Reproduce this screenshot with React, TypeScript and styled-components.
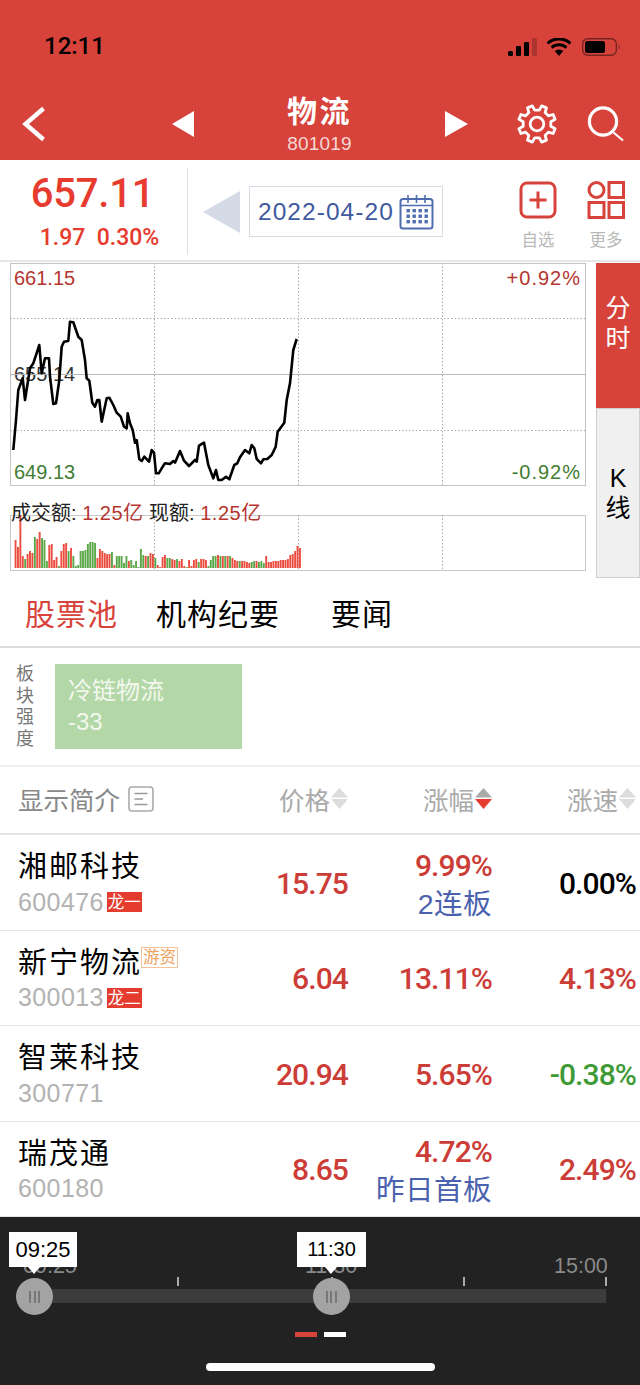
import styled, { createGlobalStyle } from 'styled-components';

const RED = '#d7433b';
const NUM_RED = '#cc3d37';
const NUM_GREEN = '#3f9a35';
const BLUE = '#4a62ad';

// traced off the intraday line, in px * 3
const pricePoints = [
  40, 570, 48, 480, 55, 390, 68, 355, 75, 420, 90, 325, 100, 310, 118, 255, 125, 340, 135, 295, 147, 295, 150, 350,
  160, 432, 168, 430, 178, 360, 185, 260, 192, 245, 205, 243, 210, 185, 220, 187, 235, 230, 245, 240, 255, 300, 260,
  355, 268, 362, 277, 428, 285, 440, 292, 420, 298, 420, 305, 485, 320, 415, 328, 413, 340, 435, 350, 458, 362, 470,
  372, 500, 380, 505, 383, 460, 390, 490, 398, 510, 405, 548, 410, 540, 418, 598, 425, 603, 433, 590, 447, 605, 455,
  570, 462, 578, 468, 640, 476, 640, 485, 625, 495, 610, 510, 612, 520, 603, 525, 608, 540, 573, 552, 602, 567, 618,
  585, 600, 590, 605, 597, 557, 612, 548, 625, 615, 640, 655, 648, 630, 655, 660, 665, 660, 678, 650, 688, 658, 703,
  615, 712, 610, 720, 592, 735, 570, 748, 580, 755, 555, 763, 565, 770, 597, 783, 610, 790, 598, 802, 597, 815, 585,
  827, 560, 833, 515, 853, 488, 860, 420, 870, 370, 880, 270, 890, 237,
];

const pricePath = pricePoints
  .reduce<string[]>((acc, v, i) => {
    if (i % 2 === 0) acc.push(`${(v / 3 - 10).toFixed(1)},${(pricePoints[i + 1] / 3 - 3).toFixed(1)}`);
    return acc;
  }, [])
  .join(' ');

// positive = red bar, negative = green bar
const volumes = [
  28, 21, 53, 12, -9, 14, 17, 15, -31, 29, 36, -30, -28, -7, 23, 24, 8, 11, -2, 17, 24, 25, -17, 20, -12, -2, -3, -17,
  -17, -18, -24, -26, -26, -25, 10, 19, 17, 15, 14, 14, -16, 3, -12, -12, -12, -5, -12, 7, -8, -3, -7, -1, -19, -13,
  12, -12, 15, 14, -10, 3, 1, 11, 13, -10, -10, 9, 8, -9, 7, 9, 2, -1, 8, 2, 8, 9, -6, 9, 9, 8, -2, -8, -12, -12, 13,
  -12, 12, -12, 12, -12, 10, 8, 7, -7, 7, 7, 6, 5, -6, -7, 7, -6, -7, -5, 12, 6, 6, 7, 7, 7, 8, 8, 8, 9, 13, 14, 17,
  22, 20,
];

const gearPath = (() => {
  const pts: string[] = [];
  const polar = (r: number, deg: number) => {
    const a = (deg * Math.PI) / 180;
    return `${(r * Math.cos(a)).toFixed(2)} ${(r * Math.sin(a)).toFixed(2)}`;
  };
  for (let i = 0; i < 8; i++) {
    const a = i * 45 + 22.5;
    pts.push(polar(14, a - 13), polar(18.7, a - 8), polar(18.7, a + 8), polar(14, a + 13));
  }
  return `M${pts.join(' L')} Z`;
})();

const stocks = [
  { name: '湘邮科技', code: '600476', rank: '龙一', price: '15.75', pct: '9.99%', note: '2连板', speed: '0.00%', tone: 'flat' },
  { name: '新宁物流', code: '300013', rank: '龙二', hot: '游资', price: '6.04', pct: '13.11%', speed: '4.13%', tone: 'up' },
  { name: '智莱科技', code: '300771', price: '20.94', pct: '5.65%', speed: '-0.38%', tone: 'down' },
  { name: '瑞茂通', code: '600180', price: '8.65', pct: '4.72%', note: '昨日首板', speed: '2.49%', tone: 'up' },
];

const speedColors: Record<string, string> = { flat: '#000', up: NUM_RED, down: NUM_GREEN };

function SortArrows({ active }: { active?: boolean }) {
  return (
    <svg width='17' height='21' viewBox='0 0 17 21'>
      <path d='M8.5 0 L17 9.5 H0 Z' fill={active ? '#aaa' : '#dcdcdc'} />
      <path d='M8.5 21 L17 11 H0 Z' fill={active ? '#e63b2e' : '#dcdcdc'} />
    </svg>
  );
}

function App() {
  return (
    <>
      <GlobalStyle />
      <PageDiv>
        <HeaderDiv>
          <StatusBar>
            <TimeSpan>12:11</TimeSpan>
            <StatusIcons>
              <svg width='29' height='18' viewBox='0 0 29 18'>
                <rect x='0' y='13' width='5' height='5' rx='1.5' fill='#000' />
                <rect x='8' y='8' width='5' height='10' rx='1' fill='#000' />
                <rect x='16' y='4' width='5' height='14' rx='1' fill='#000' />
                <rect x='24' y='0' width='5' height='18' rx='1' fill='#000' opacity='0.2' />
              </svg>
              <svg width='27' height='18' viewBox='0 0 27 18'>
                <path d='M13 18 L8.8 13 A6.4 6.4 0 0 1 17.2 13 Z' fill='#000' />
                <path d='M5.6 9.6 A11 11 0 0 1 20.4 9.6' fill='none' stroke='#000' strokeWidth='3' />
                <path d='M1.6 5.4 A16.8 16.8 0 0 1 24.4 5.4' fill='none' stroke='#000' strokeWidth='3' />
              </svg>
              <svg width='39' height='18' viewBox='0 0 39 18'>
                <rect x='0.7' y='0.7' width='33.6' height='16.6' rx='5' fill='none' stroke='#000' strokeOpacity='0.45' strokeWidth='1.4' />
                <rect x='3' y='3' width='20' height='12' rx='2.5' fill='#000' />
                <path d='M36.5 6.5 C38 7 38 11 36.5 11.5 Z' fill='#000' fillOpacity='0.45' />
              </svg>
            </StatusIcons>
          </StatusBar>
          <NavBar>
            <svg width='24' height='36' viewBox='0 0 24 36'>
              <path d='M21.5 2.5 L3.5 18 L21.5 33.5' fill='none' stroke='#fff' strokeWidth='4.4' />
            </svg>
            <NavTriangle $dir='left' />
            <TitleBlock>
              <TitleText>物流</TitleText>
              <CodeText>801019</CodeText>
            </TitleBlock>
            <NavTriangle $dir='right' />
            <NavIconCell>
              <svg width='40' height='40' viewBox='-20 -20 40 40'>
                <path d={gearPath} fill='none' stroke='#fff' strokeWidth='2.8' strokeLinejoin='round' />
                <circle r='6.8' fill='none' stroke='#fff' strokeWidth='2.8' />
              </svg>
            </NavIconCell>
            <NavIconCell>
              <svg width='40' height='40' viewBox='0 0 40 40'>
                <circle cx='17' cy='17.5' r='13.6' fill='none' stroke='#fff' strokeWidth='3.2' />
                <path d='M27.5 28.5 L37 36.5' stroke='#fff' strokeWidth='2.2' />
              </svg>
            </NavIconCell>
          </NavBar>
        </HeaderDiv>

        <InfoRow>
          <QuoteBlock>
            <QuotePrice>657.11</QuotePrice>
            <QuoteChange>1.97&nbsp;&nbsp;0.30%</QuoteChange>
          </QuoteBlock>
          <DateGroup>
            <PrevDayTriangle />
            <DateBox>
              <DateText>2022-04-20</DateText>
              <svg width='35' height='36' viewBox='0 0 35 36'>
                <rect x='1.5' y='5' width='32' height='29.5' rx='2.5' fill='none' stroke='#506cb0' strokeWidth='2' />
                <path d='M1.5 11.5 H33.5' stroke='#506cb0' strokeWidth='1.6' />
                <path d='M9 1 V9 M17.5 1 V9 M26 1 V9' stroke='#506cb0' strokeWidth='1.6' />
                <g fill='#506cb0'>
                  {[15, 20.5, 26].map((y) =>
                    [7.5, 13.5, 19.5, 25.5].map((x) => <rect key={`${x}-${y}`} x={x} y={y} width='3.4' height='3.4' />)
                  )}
                </g>
              </svg>
            </DateBox>
          </DateGroup>
          <ActionsDiv>
            <ActionItem>
              <svg width='38' height='38' viewBox='0 0 38 38'>
                <rect x='2' y='2' width='34' height='34' rx='6' fill='none' stroke={RED} strokeWidth='3' />
                <path d='M10.5 19 H27.5 M19 10.5 V27.5' stroke={RED} strokeWidth='3' />
              </svg>
              <ActionLabel>自选</ActionLabel>
            </ActionItem>
            <ActionItem>
              <svg width='38' height='38' viewBox='0 0 38 38'>
                <circle cx='9.5' cy='9' r='7.5' fill='none' stroke={RED} strokeWidth='3' />
                <rect x='22' y='1.5' width='14.5' height='15' fill='none' stroke={RED} strokeWidth='3' />
                <rect x='2' y='21.5' width='15' height='15' fill='none' stroke={RED} strokeWidth='3' />
                <rect x='22' y='21.5' width='14.5' height='15' fill='none' stroke={RED} strokeWidth='3' />
              </svg>
              <ActionLabel>更多</ActionLabel>
            </ActionItem>
          </ActionsDiv>
        </InfoRow>

        <ChartSection>
          <ChartColumn>
            <PricePanel>
              <PriceLabel $color='#b5352f' $top={3} $left={4}>661.15</PriceLabel>
              <PriceLabel $color='#333' $top={99} $left={4}>655.14</PriceLabel>
              <PriceLabel $color='#3f7d32' $top={197} $left={4}>649.13</PriceLabel>
              <PriceLabel $color='#b5352f' $top={3} $right={5}>+0.92%</PriceLabel>
              <PriceLabel $color='#3f7d32' $top={197} $right={5}>-0.92%</PriceLabel>
              <ChartSvg width='576' height='223' viewBox='0 0 576 223'>
                <rect x='0.5' y='0.5' width='575' height='222' fill='none' stroke='#c4c4c4' />
                <path d='M0 55.5 H576 M0 167.5 H576 M144.5 0 V223 M288.5 0 V223 M432.5 0 V223' stroke='#aaa' strokeDasharray='1.5 2' />
                <path d='M0 111.5 H576' stroke='#b8b8b8' />
                <polyline points={pricePath} fill='none' stroke='#000' strokeWidth='2.6' strokeLinejoin='round' />
              </ChartSvg>
            </PricePanel>
            <VolumePanel>
              <VolumeLabel>
                成交额: <VolumeValue>1.25亿</VolumeValue> 现额: <VolumeValue>1.25亿</VolumeValue>
              </VolumeLabel>
              <svg width='576' height='56' viewBox='0 0 576 56' style={{ display: 'block' }}>
                <rect x='0.5' y='0.5' width='575' height='55' fill='none' stroke='#c8c8c8' />
                <path d='M144.5 0 V56 M288.5 0 V56 M432.5 0 V56' stroke='#aaa' strokeDasharray='1.5 2' />
                {volumes.map((v, i) => (
                  <rect
                    key={i}
                    x={4.6 + i * 2.41}
                    y={53 - Math.abs(v)}
                    width='1.9'
                    height={Math.abs(v)}
                    fill={v > 0 ? '#ea4d3f' : '#5aa84a'}
                  />
                ))}
              </svg>
            </VolumePanel>
          </ChartColumn>
          <ModeTabs>
            <ModeTab $active>
              分<br />时
            </ModeTab>
            <ModeTab>
              K<br />线
            </ModeTab>
          </ModeTabs>
        </ChartSection>

        <TabsRow>
          <TabItem $active>股票池</TabItem>
          <TabItem>机构纪要</TabItem>
          <TabItem>要闻</TabItem>
        </TabsRow>

        <StrengthRow>
          <StrengthLabel>
            板<br />块<br />强<br />度
          </StrengthLabel>
          <StrengthCell>
            <div>冷链物流</div>
            <div>-33</div>
          </StrengthCell>
        </StrengthRow>

        <TableHeader>
          <IntroToggle>
            显示简介
            <svg width='26' height='26' viewBox='0 0 26 26'>
              <rect x='1' y='1' width='24' height='24' rx='3' fill='none' stroke='#aaa' strokeWidth='1.6' />
              <path d='M6.5 7.5 H19.5 M6.5 13 H15 M6.5 18.5 H19.5' stroke='#999' strokeWidth='1.6' />
            </svg>
          </IntroToggle>
          <HeadCell>
            价格
            <SortArrows />
          </HeadCell>
          <HeadCell>
            涨幅
            <SortArrows active />
          </HeadCell>
          <HeadCell>
            涨速
            <SortArrows />
          </HeadCell>
        </TableHeader>

        {stocks.map((s) => (
          <StockRow key={s.code}>
            <NameCell>
              <NameLine>
                <StockName>{s.name}</StockName>
                {s.hot && <HotBadge>{s.hot}</HotBadge>}
              </NameLine>
              <NameLine>
                <StockCode>{s.code}</StockCode>
                {s.rank && <RankBadge>{s.rank}</RankBadge>}
              </NameLine>
            </NameCell>
            <NumCell $color={NUM_RED}>{s.price}</NumCell>
            <NumCell $color={NUM_RED} $stacked={!!s.note}>
              <div>{s.pct}</div>
              {s.note && <NoteText>{s.note}</NoteText>}
            </NumCell>
            <NumCell $color={speedColors[s.tone]}>{s.speed}</NumCell>
          </StockRow>
        ))}

        <TimelinePanel>
          <Track>
            <AxisLabel $left={-11}>09:25</AxisLabel>
            <AxisLabel $left={271}>11:30</AxisLabel>
            <AxisLabel $left={520}>15:00</AxisLabel>
            {[143, 297, 429, 571].map((x) => (
              <AxisTick key={x} $left={x} />
            ))}
            <Thumb $left={0}>
              <GripLines />
              <ThumbTip $wide>09:25</ThumbTip>
            </Thumb>
            <Thumb $left={297}>
              <GripLines />
              <ThumbTip>11:30</ThumbTip>
            </Thumb>
          </Track>
          <PagerDots>
            <PagerDot $color={RED} />
            <PagerDot $color='#fff' />
          </PagerDots>
          <HomeIndicator />
        </TimelinePanel>
      </PageDiv>
    </>
  );
}

const GlobalStyle = createGlobalStyle`
  body {
    margin: 0;
    background: #fff;
    font-family: 'Liberation Sans', 'Noto Sans CJK SC', sans-serif;
  }
`;

const PageDiv = styled.div`
  display: flex;
  flex-direction: column;
  width: 640px;
  height: 1385px;
  overflow: hidden;
  background: #fff;
`;

const HeaderDiv = styled.div`
  height: 160px;
  background: ${RED};
`;

const StatusBar = styled.div`
  display: flex;
  align-items: center;
  justify-content: space-between;
  height: 32px;
  padding: 30px 19px 30px 44px;
`;

const TimeSpan = styled.span`
  font-family: Roboto, sans-serif;
  font-size: 24px;
  font-weight: 500;
  color: #000;
`;

const StatusIcons = styled.div`
  display: flex;
  align-items: center;
  gap: 9px;
  margin-top: 2px;
`;

const NavBar = styled.div`
  display: grid;
  grid-template-columns: 150px 22px 251px 23px 89px 69px;
  align-items: center;
  height: 60px;
  padding-left: 22px;
`;

const NavTriangle = styled.div<{ $dir: 'left' | 'right' }>`
  width: 0;
  height: 0;
  border-top: 13px solid transparent;
  border-bottom: 13px solid transparent;
  ${(p) => (p.$dir === 'left' ? 'border-right: 22px solid #fff;' : 'border-left: 23px solid #fff;')}
`;

const TitleBlock = styled.div`
  display: flex;
  flex-direction: column;
  align-items: center;
  align-self: start;
`;

const TitleText = styled.div`
  font-size: 30px;
  line-height: 40px;
  font-weight: 700;
  letter-spacing: 2.5px;
  color: #fff;
`;

const CodeText = styled.div`
  font-size: 19px;
  line-height: 24px;
  letter-spacing: 0.2px;
  color: #f4d8d5;
`;

const NavIconCell = styled.div`
  display: flex;
  justify-content: flex-end;
`;

const InfoRow = styled.div`
  display: flex;
  align-items: flex-start;
  height: 100px;
  border-bottom: 2px solid #e6e6e6;
`;

const QuoteBlock = styled.div`
  box-sizing: border-box;
  width: 188px;
  height: 87px;
  margin-top: 8px;
  padding-top: 4px;
  border-right: 1px solid #e0e0e0;
  text-align: center;
`;

const QuotePrice = styled.div`
  font-family: Roboto, sans-serif;
  font-size: 40px;
  line-height: 44px;
  font-weight: 500;
  color: #e63b2e;
  letter-spacing: -0.2px;
  margin-right: 2px;
`;

const QuoteChange = styled.div`
  margin-top: 7px;
  padding-left: 12px;
  font-family: Roboto, sans-serif;
  font-size: 23px;
  line-height: 30px;
  font-weight: 500;
  color: #e63b2e;
`;

const DateGroup = styled.div`
  display: flex;
  align-items: center;
  gap: 9px;
  margin: 26px 0 0 15px;
`;

const PrevDayTriangle = styled.div`
  width: 0;
  height: 0;
  border-top: 21px solid transparent;
  border-bottom: 21px solid transparent;
  border-right: 37px solid #d5dbe6;
`;

const DateBox = styled.div`
  box-sizing: border-box;
  display: flex;
  align-items: center;
  gap: 5px;
  width: 194px;
  height: 51px;
  padding-left: 8px;
  border: 1px solid #d8dce5;
`;

const DateText = styled.span`
  font-size: 24.5px;
  letter-spacing: 1.05px;
  color: #3f5a9e;
  white-space: nowrap;
`;

const ActionsDiv = styled.div`
  display: flex;
  gap: 28px;
  margin: 21px 0 0 75px;
`;

const ActionItem = styled.div`
  display: flex;
  flex-direction: column;
  align-items: center;
  width: 40px;
`;

const ActionLabel = styled.div`
  margin-top: 10px;
  font-size: 16.5px;
  line-height: 22px;
  color: #b8b8b8;
  white-space: nowrap;
`;

const ChartSection = styled.div`
  display: flex;
  height: 315px;
  padding-top: 1px;
`;

const ChartColumn = styled.div`
  width: 576px;
  margin-left: 10px;
`;

const PricePanel = styled.div`
  position: relative;
  height: 223px;
`;

const ChartSvg = styled.svg`
  position: relative;
  z-index: 1;
  display: block;
`;

const PriceLabel = styled.div<{ $color: string; $top: number; $left?: number; $right?: number }>`
  position: absolute;
  top: ${(p) => p.$top}px;
  ${(p) => (p.$left !== undefined ? `left: ${p.$left}px;` : `right: ${p.$right}px; letter-spacing: 1px;`)}
  font-size: 20px;
  line-height: 24px;
  color: ${(p) => p.$color};
`;

const VolumePanel = styled.div`
  position: relative;
  margin-top: 29px;
`;

const VolumeLabel = styled.div`
  position: absolute;
  top: -15px;
  left: 1px;
  z-index: 1;
  font-size: 20px;
  line-height: 26px;
  color: #222;
  white-space: nowrap;
`;

const VolumeValue = styled.span`
  letter-spacing: 0.5px;
  color: #b5352f;
`;

const ModeTabs = styled.div`
  display: flex;
  flex-direction: column;
  width: 44px;
  margin-left: 10px;
`;

const ModeTab = styled.div<{ $active?: boolean }>`
  box-sizing: border-box;
  height: ${(p) => (p.$active ? 145 : 170)}px;
  padding-top: ${(p) => (p.$active ? 30 : 54)}px;
  border: ${(p) => (p.$active ? 'none' : '1px solid #cfcfcf')};
  background: ${(p) => (p.$active ? RED : '#f0f0f0')};
  color: ${(p) => (p.$active ? '#fff' : '#000')};
  font-size: 25px;
  line-height: 30px;
  text-align: center;
`;

const TabsRow = styled.div`
  display: grid;
  grid-template-columns: 131px 175px auto;
  align-items: center;
  height: 68px;
  padding-left: 25px;
  border-bottom: 2px solid #dcdcdc;
`;

const TabItem = styled.div<{ $active?: boolean }>`
  font-size: 30px;
  letter-spacing: 1px;
  color: ${(p) => (p.$active ? RED : '#000')};
`;

const StrengthRow = styled.div`
  display: flex;
  gap: 21px;
  height: 85px;
  padding: 16px 0 16px 16px;
  border-bottom: 2px solid #eee;
`;

const StrengthLabel = styled.div`
  width: 18px;
  font-size: 18px;
  line-height: 21.5px;
  color: #777;
`;

const StrengthCell = styled.div`
  box-sizing: border-box;
  width: 187px;
  height: 85px;
  padding: 11px 13px;
  background: #b4d7a8;
  color: #f2f8ee;
  font-size: 24px;
  line-height: 31px;
`;

const stockGrid = `
  display: grid;
  grid-template-columns: 210px 120px 144px 144px;
  align-items: center;
`;

const TableHeader = styled.div`
  ${stockGrid}
  height: 63px;
  padding: 0 4px 3px 18px;
  border-bottom: 2px solid #e3e3e3;
`;

const IntroToggle = styled.div`
  display: flex;
  align-items: center;
  gap: 8px;
  font-size: 25.5px;
  color: #888;
`;

const HeadCell = styled.div`
  display: flex;
  align-items: center;
  justify-content: flex-end;
  gap: 1px;
  font-size: 25.5px;
  color: #aaa;
`;

const StockRow = styled.div`
  ${stockGrid}
  height: 94.5px;
  padding: 0 4px 0 18px;
  border-bottom: 1px solid #e4e4e4;
`;

const NameCell = styled.div`
  display: flex;
  flex-direction: column;
  padding-top: 2px;
`;

const NameLine = styled.div`
  display: flex;
  align-items: center;
  height: 38px;
`;

const StockName = styled.span`
  font-size: 29px;
  letter-spacing: 2px;
  color: #000;
  white-space: nowrap;
`;

const StockCode = styled.span`
  font-size: 25px;
  letter-spacing: 0.4px;
  color: #b2b2b2;
`;

const RankBadge = styled.span`
  margin-left: 3px;
  padding: 0 1px;
  background: #e43d2f;
  color: #fff;
  font-size: 16.5px;
  line-height: 20px;
  white-space: nowrap;
`;

const HotBadge = styled.span`
  box-sizing: border-box;
  margin: -4px 0 0 -1px;
  padding: 0 1px;
  border: 1px solid #f3c29a;
  color: #ef9f5c;
  font-size: 16.5px;
  line-height: 19px;
  white-space: nowrap;
`;

const NumCell = styled.div<{ $color: string; $stacked?: boolean }>`
  padding-top: ${(p) => (p.$stacked ? 5 : 3)}px;
  font-family: Roboto, sans-serif;
  font-size: 30px;
  line-height: 38px;
  font-weight: 500;
  letter-spacing: -0.9px;
  text-align: right;
  color: ${(p) => p.$color};
`;

const NoteText = styled.div`
  font-family: 'Liberation Sans', 'Noto Sans CJK SC', sans-serif;
  font-size: 28.5px;
  font-weight: 400;
  letter-spacing: 0.5px;
  color: ${BLUE};
`;

const TimelinePanel = styled.div`
  display: flex;
  flex-direction: column;
  flex: 1;
  background: #222;
  padding-top: 72px;
`;

const Track = styled.div`
  position: relative;
  width: 572px;
  height: 14px;
  margin-left: 34px;
  background: #3c3c3c;
`;

const AxisLabel = styled.div<{ $left: number }>`
  position: absolute;
  left: ${(p) => p.$left}px;
  top: -36px;
  font-size: 21.5px;
  line-height: 26px;
  color: #8a8a8a;
`;

const AxisTick = styled.div<{ $left: number }>`
  position: absolute;
  left: ${(p) => p.$left}px;
  top: -12px;
  width: 1.5px;
  height: 9px;
  background: #aaa;
`;

const Thumb = styled.div<{ $left: number }>`
  position: absolute;
  left: ${(p) => p.$left - 18}px;
  top: -11px;
  display: flex;
  align-items: center;
  justify-content: center;
  width: 37px;
  height: 37px;
  border-radius: 50%;
  background: #a3a3a3;
`;

const GripLines = styled.div`
  width: 11px;
  height: 12px;
  background: repeating-linear-gradient(90deg, #777 0 2px, transparent 2px 4.5px);
`;

const ThumbTip = styled.div<{ $wide?: boolean }>`
  position: absolute;
  left: ${(p) => (p.$wide ? -7 : -16)}px;
  bottom: 48px;
  width: ${(p) => (p.$wide ? 68 : 69)}px;
  height: 35px;
  background: #fff;
  color: #000;
  font-size: ${(p) => (p.$wide ? 22 : 20)}px;
  line-height: 35px;
  text-align: center;

  &::after {
    content: '';
    position: absolute;
    left: ${(p) => (p.$wide ? 19 : 28)}px;
    top: 35px;
    border-top: 7px solid #fff;
    border-left: 6px solid transparent;
    border-right: 6px solid transparent;
  }
`;

const PagerDots = styled.div`
  display: flex;
  justify-content: center;
  gap: 7px;
  margin-top: 29px;
`;

const PagerDot = styled.div<{ $color: string }>`
  width: 22px;
  height: 5px;
  background: ${(p) => p.$color};
`;

const HomeIndicator = styled.div`
  align-self: center;
  width: 229px;
  height: 8px;
  margin-top: 26px;
  border-radius: 4px;
  background: #fff;
`;

export default App;
